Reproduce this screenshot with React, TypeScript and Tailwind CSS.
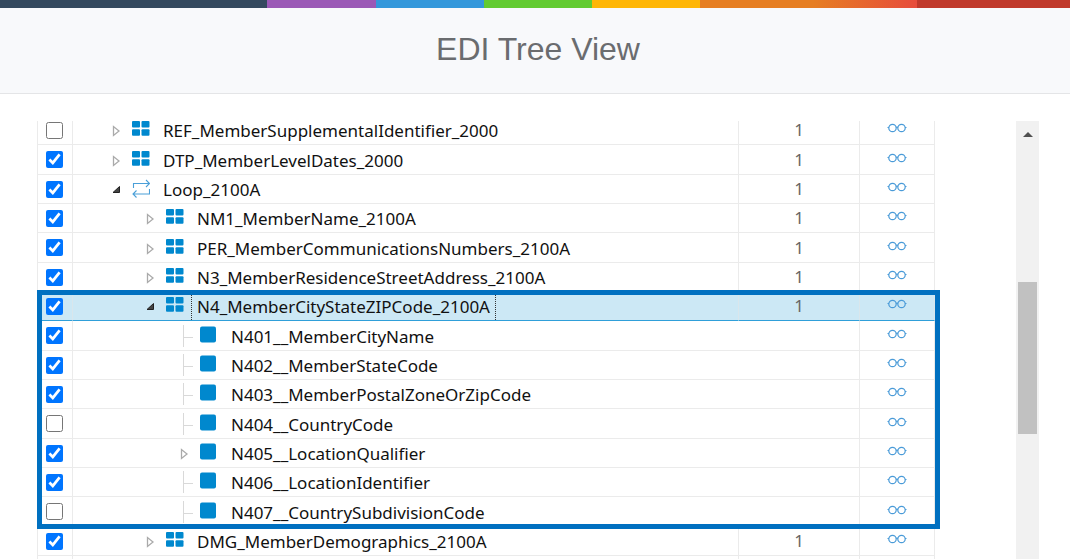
import React, { useState } from 'react';

type NodeKind = 'segment' | 'loop' | 'element';
type ToggleState = 'open' | 'closed' | 'leaf';

interface TreeRow {
  name: string;
  level: 0 | 1 | 2;
  kind: NodeKind;
  toggle: ToggleState;
  checked: boolean;
  selected?: boolean;
}

const rows: TreeRow[] = [
  { name: 'REF_MemberSupplementalIdentifier_2000', level: 0, kind: 'segment', toggle: 'closed', checked: false },
  { name: 'DTP_MemberLevelDates_2000', level: 0, kind: 'segment', toggle: 'closed', checked: true },
  { name: 'Loop_2100A', level: 0, kind: 'loop', toggle: 'open', checked: true },
  { name: 'NM1_MemberName_2100A', level: 1, kind: 'segment', toggle: 'closed', checked: true },
  { name: 'PER_MemberCommunicationsNumbers_2100A', level: 1, kind: 'segment', toggle: 'closed', checked: true },
  { name: 'N3_MemberResidenceStreetAddress_2100A', level: 1, kind: 'segment', toggle: 'closed', checked: true },
  { name: 'N4_MemberCityStateZIPCode_2100A', level: 1, kind: 'segment', toggle: 'open', checked: true, selected: true },
  { name: 'N401__MemberCityName', level: 2, kind: 'element', toggle: 'leaf', checked: true },
  { name: 'N402__MemberStateCode', level: 2, kind: 'element', toggle: 'leaf', checked: true },
  { name: 'N403__MemberPostalZoneOrZipCode', level: 2, kind: 'element', toggle: 'leaf', checked: true },
  { name: 'N404__CountryCode', level: 2, kind: 'element', toggle: 'leaf', checked: false },
  { name: 'N405__LocationQualifier', level: 2, kind: 'element', toggle: 'closed', checked: true },
  { name: 'N406__LocationIdentifier', level: 2, kind: 'element', toggle: 'leaf', checked: true },
  { name: 'N407__CountrySubdivisionCode', level: 2, kind: 'element', toggle: 'leaf', checked: false },
  { name: 'DMG_MemberDemographics_2100A', level: 1, kind: 'segment', toggle: 'closed', checked: true },
];

const indent = ['pl-[38px]', 'pl-[72px]', 'pl-[106px]'];

const ToggleIcon: React.FC<{ state: ToggleState }> = ({ state }) => {
  if (state === 'leaf') {
    return (
      <svg className="w-4 h-6 shrink-0" viewBox="0 0 16 24" aria-hidden="true">
        <path d="M4.5 1v22M5 13.5h9" stroke="#d9d9d9" fill="none" />
      </svg>
    );
  }

  return (
    <button type="button" className="w-4 h-6 shrink-0" aria-label={state === 'open' ? 'Collapse' : 'Expand'}>
      <svg className="w-4 h-6" viewBox="0 0 16 24">
        {state === 'open' ? (
          <path d="M8.500 9.500v6H2z" fill="#444" stroke="#222" strokeLinejoin="round" />
        ) : (
          <path d="M2.5 8.500v9l5.500-4.500z" fill="#fff" stroke="#aaa" strokeWidth="1.3" />
        )}
      </svg>
    </button>
  );
};

const NodeIcon: React.FC<{ kind: NodeKind }> = ({ kind }) => {
  // Shapes sit slightly above the middle of the row
  return (
    <svg className="w-[18px] h-6 shrink-0" viewBox="0 0 18 24" aria-hidden="true">
      {kind === 'segment' && (
        <g fill="#0088ce">
          <rect x="0" y="3" width="8" height="6.6" rx="1" />
          <rect x="9.5" y="3" width="8" height="6.6" rx="1" />
          <rect x="0" y="11.2" width="8" height="6.6" rx="1" />
          <rect x="9.5" y="11.2" width="8" height="6.6" rx="1" />
        </g>
      )}
      {kind === 'element' && <rect x="0" y="2.5" width="16" height="16" rx="2" fill="#0088ce" />}
      {kind === 'loop' && (
        <g fill="none" stroke="#4a9fd8" strokeWidth="1.1">
          <path d="M1.500 11V6.500h16M14 3l3.500 3.500-3.500 3.500" />
          <path d="M17.500 12v5H1M4.500 13.500l-3.500 3.500 3.500 3.500" />
        </g>
      )}
    </svg>
  );
};

const GlassesIcon: React.FC = () => (
  <svg className="w-5 h-3" viewBox="0 0 20 12" fill="none" stroke="#4a9bd8" strokeWidth="1.2">
    <circle cx="5.500" cy="6" r="3.700" />
    <circle cx="14.500" cy="6" r="3.700" />
    <path d="M9 5.500q1-.8 2 0M2 5.500H.5M18 5.500h1.500" />
  </svg>
);

const TreeTable: React.FC = () => {
  const [checked, setChecked] = useState(rows.map(row => row.checked));

  const toggle = (index: number) => {
    setChecked(checked.map((value, i) => (i === index ? !value : value)));
  };

  return (
    <table className="w-full table-fixed border-separate border-spacing-0 border-l border-[#ebebeb]">
      <colgroup>
        <col className="w-[35px]" />
        <col />
        <col className="w-[121px]" />
        <col className="w-[75px]" />
      </colgroup>
      <tbody>
        {rows.map((row, index) => {
          const cell = row.selected
            ? 'p-0 border-r border-b border-r-[#d9e6ec] border-b-[#2f9fd9] bg-[#cce8f5]'
            : 'p-0 border-r border-b border-[#ebebeb]';

          return (
            <tr key={row.name} className="h-[29px] [&:nth-child(3n+2)]:h-[30px]">
              <td className={cell}>
                <input
                  type="checkbox"
                  id={`node-${index}`}
                  checked={checked[index]}
                  onChange={() => toggle(index)}
                  className="block ml-2 w-[17px] h-[17px]"
                />
              </td>
              <td className={cell} colSpan={row.level === 2 ? 2 : 1}>
                <div className={`flex items-center h-7 ${indent[row.level]}`}>
                  <ToggleIcon state={row.toggle} />
                  <span className="ml-[5px] mr-[7px] flex">
                    <NodeIcon kind={row.kind} />
                  </span>
                  <label
                    htmlFor={`node-${index}`}
                    className={`px-[5px] pt-[2px] border-x border-dotted text-[17px] leading-[26px] whitespace-nowrap text-[#111] ${
                      row.selected ? 'border-[#333]' : 'border-transparent'
                    }`}
                  >
                    {row.name}
                  </label>
                </div>
              </td>
              {row.level !== 2 && (
                <td className={`${cell} text-center text-[17px] leading-7 text-[#666]`}>1</td>
              )}
              <td className={cell}>
                <button type="button" className="flex mx-auto pb-1" aria-label={`View ${row.name}`}>
                  <GlassesIcon />
                </button>
              </td>
            </tr>
          );
        })}
        <tr className="h-[29px]">
          <td className="border-r border-[#ebebeb]" />
          <td className="border-r border-[#ebebeb]" />
          <td className="border-r border-[#ebebeb]" />
          <td className="border-r border-[#ebebeb]" />
        </tr>
      </tbody>
    </table>
  );
};

const App: React.FC = () => {
  return (
    <div className="flex flex-col h-screen overflow-hidden bg-white font-['Noto_Sans','Open_Sans',sans-serif]">
      <div className="h-2 shrink-0 bg-[linear-gradient(to_right,#34495e_25%,#9b59b6_25%,#9b59b6_35.1%,#3498db_35.1%,#3498db_45.2%,#62cb31_45.2%,#62cb31_55.3%,#ffb606_55.3%,#ffb606_65.4%,#e67e22_65.4%,#e67e22_76%,#e74c3c_85.7%,#c0392b_85.7%)]" />

      <header className="shrink-0 pt-[21px] pb-6 bg-[#f8f9fb] border-b border-[#e4e5e7]">
        <h1 className="pl-1.5 text-center text-[32px] leading-10 text-[#6a6c6f] font-['Liberation_Sans',Arial,sans-serif]">
          EDI Tree View
        </h1>
      </header>

      <main className="flex flex-1 min-h-0 pt-[22px] pl-[37px] pr-[31px]">
        <div className="flex-1 min-w-0 overflow-hidden pr-[81px]">
          <div className="relative">
            <TreeTable />
            {/* Hides the column lines above the scrolled first row */}
            <div className="absolute top-0 inset-x-0 h-[5px] bg-white pointer-events-none" />
            {/* Frame around the expanded N4 segment */}
            <div className="absolute top-[174px] left-0 -right-[5px] h-[239px] border-5 border-[#0070c0] pointer-events-none" />
          </div>
        </div>

        {/* Scrollbar */}
        <div className="w-[23px] mt-[5px] shrink-0 bg-[#f1f1f1]">
          <button type="button" className="flex items-center justify-center w-full h-[26px]" aria-label="Scroll up">
            <svg className="w-[10px] h-[5px]" viewBox="0 0 10 5">
              <path d="M5 0l5 5H0z" fill="#505050" />
            </svg>
          </button>
          <div className="mx-auto mt-[135px] w-[19px] h-[152px] bg-[#c1c1c1]" />
        </div>
      </main>
    </div>
  );
};

export default App;
